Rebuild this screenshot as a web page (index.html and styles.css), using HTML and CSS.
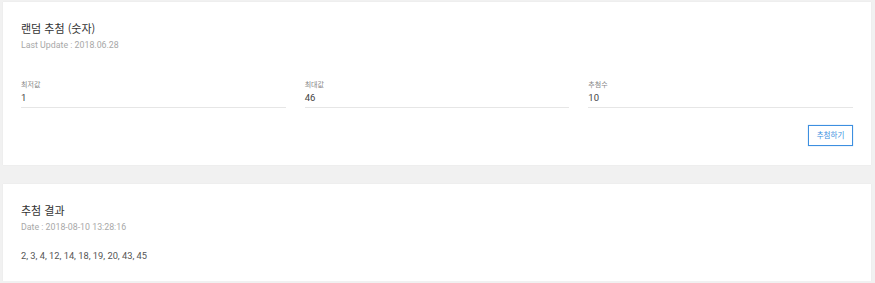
FILE: index.html
```html
<!DOCTYPE html>
<html lang="ko">
<head>
<meta charset="utf-8">
<link rel="stylesheet" href="styles.css">
</head>
<body>
<div class="page">
  <section class="card card-form">
    <h2 class="title">랜덤 추첨 (숫자)</h2>
    <p class="sub">Last Update : 2018.06.28</p>
    <div class="fields">
      <div class="field">
        <label class="label">최저값</label>
        <div class="value">1</div>
      </div>
      <div class="field">
        <label class="label">최대값</label>
        <div class="value">46</div>
      </div>
      <div class="field">
        <label class="label">추첨수</label>
        <div class="value">10</div>
      </div>
    </div>
    <div class="actions">
      <button class="btn">추첨하기</button>
    </div>
  </section>
  <section class="card card-result">
    <h2 class="title">추첨 결과</h2>
    <p class="sub">Date : 2018-08-10 13:28:16</p>
    <p class="result">2, 3, 4, 12, 14, 18, 19, 20, 43, 45</p>
  </section>
</div>
</body>
</html>
```
FILE: styles.css
```css
html, body {
  margin: 0;
  padding: 0;
  background: #f1f1f1;
}
body {
  font-family: Roboto, "Noto Sans CJK KR", sans-serif;
  color: #333;
}
.page {
  padding: 2px 4px 0 3px;
}
.card {
  background: #fff;
  box-shadow: 0 0 1px rgba(0,0,0,0.08);
  padding: 17px 18px 0 18px;
}
.card-form {
  height: 146px;
}
.card-result {
  margin-top: 19px;
  height: 80px;
}
.title {
  margin: 0;
  font-family: "Noto Sans CJK KR", sans-serif;
  font-size: 11px;
  font-weight: 400;
  line-height: 18px;
  color: #333;
}
.sub {
  margin: 1px 0 0 0;
  font-size: 8.8px;
  line-height: 14px;
  color: #a8a8a8;
}
.fields {
  display: grid;
  grid-template-columns: 1fr 1fr 1fr;
  column-gap: 19px;
  margin-top: 27px;
}
.label {
  display: block;
  font-family: "Noto Sans CJK KR", sans-serif;
  font-size: 7px;
  line-height: 10px;
  color: #888;
}
.value {
  margin-top: 1.5px;
  font-size: 9.5px;
  line-height: 14px;
  color: #444;
  padding-bottom: 2px;
  border-bottom: 1px solid #e6e6e6;
}
.actions {
  display: flex;
  justify-content: flex-end;
  margin-top: 17px;
}
.btn {
  width: 45px;
  height: 21px;
  padding: 0;
  background: #fff;
  border: 1.5px solid #3d8fe0;
  box-shadow: 0 0 1px rgba(61,143,224,0.5);
  color: #3d8fe0;
  font-family: "Noto Sans CJK KR", sans-serif;
  font-size: 7.5px;
  line-height: 18px;
  cursor: pointer;
}
.result {
  margin: 15px 0 0 0;
  font-size: 9.3px;
  line-height: 14px;
  color: #555;
}
```
